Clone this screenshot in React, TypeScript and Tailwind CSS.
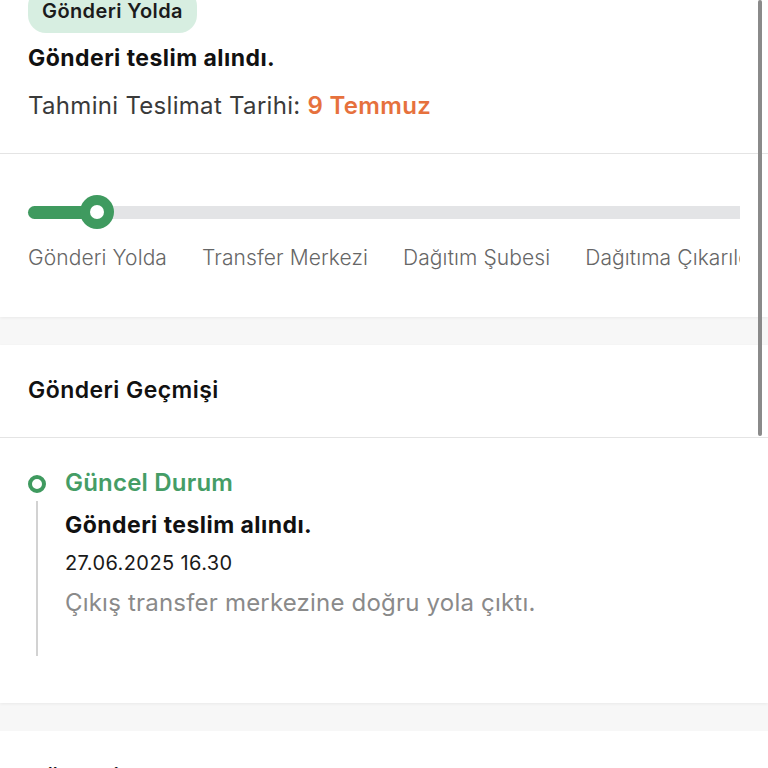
import React from "react";

const font = { fontFamily: "Inter, 'Noto Sans', sans-serif" };

export default function App() {
  const steps = ["Gönderi Yolda", "Transfer Merkezi", "Dağıtım Şubesi", "Dağıtıma Çıkarıldı", "Teslim Edildi"];
  return (
    <div className="relative w-[768px] h-[768px] overflow-hidden bg-[#f7f7f7]" style={font}>
      <div className="-mt-[12px] flex flex-col">
        {/* Card 1 */}
        <div className="bg-white shadow-[0_1px_3px_rgba(0,0,0,0.06)]">
          <div className="px-[28px] pb-[32px]">
            <div className="inline-flex h-[45px] items-center rounded-[18px] bg-[#d7eee1] px-[14px]">
              <span className="text-[20px] leading-[24px] font-semibold tracking-[0.4px] text-[#1b1b1b]">Gönderi Yolda</span>
            </div>
            <div className="mt-[11px] text-[23px] leading-[28px] font-bold tracking-[0.45px] text-[#111]">Gönderi teslim alındı.</div>
            <div className="mt-[19px] text-[24px] leading-[30px] tracking-[0.3px] text-[#3a3a3a]">
              Tahmini Teslimat Tarihi: <span className="font-semibold text-[#e6713d]">9 Temmuz</span>
            </div>
          </div>
          <div className="h-px bg-[#e4e4e4]" />
          <div className="px-[28px] pt-[41px] pb-[46px]">
            <div className="relative flex h-[34px] items-center">
              <div className="h-[13px] w-full rounded-r-[2px] rounded-l-full bg-[#e3e4e6]">
                <div className="h-[13px] w-[70px] rounded-l-full bg-[#3f9a5f]" />
              </div>
              <div className="absolute left-[52px] top-0 flex h-[34px] w-[34px] items-center justify-center rounded-full bg-[#3f9a5f]">
                <div className="h-[14px] w-[14px] rounded-full bg-white" />
              </div>
            </div>
            <div className="mt-[16px] flex gap-[35px] overflow-hidden whitespace-nowrap text-[21px] leading-[26px] font-light tracking-[0.1px] text-[#666]">
              {steps.map((s) => (
                <span key={s} className="shrink-0">{s}</span>
              ))}
            </div>
          </div>
        </div>

        <div className="h-[28px]" />

        {/* Card 2 */}
        <div className="bg-white shadow-[0_1px_3px_rgba(0,0,0,0.06)]">
          <div className="px-[28px] pt-[31px] pb-[33px] text-[23px] leading-[28px] font-semibold tracking-[0.45px] text-[#111]">Gönderi Geçmişi</div>
          <div className="h-px bg-[#e4e4e4]" />
          <div className="flex gap-[19px] px-[28px] pt-[30px] pb-[47px]">
            <div className="flex w-[18px] flex-col items-center pt-[7px]">
              <div className="h-[18px] w-[18px] rounded-full border-[4px] border-[#3f9a5f]" />
              <div className="mt-[8px] h-[155px] w-[1.5px] bg-[#d2d2d2]" />
            </div>
            <div className="flex flex-col">
              <div className="text-[24px] leading-[30px] font-semibold tracking-[0.2px] text-[#459d66]">Güncel Durum</div>
              <div className="mt-[13px] text-[23px] leading-[28px] font-bold tracking-[0.45px] text-[#111]">Gönderi teslim alındı.</div>
              <div className="mt-[11px] text-[20px] leading-[26px] tracking-[0.4px] text-[#1a1a1a]">27.06.2025 16.30</div>
              <div className="mt-[13px] text-[24px] leading-[28px] tracking-[0.2px] text-[#8a8a8a]">Çıkış transfer merkezine doğru yola çıktı.</div>
            </div>
          </div>
        </div>

        <div className="h-[28px]" />

        {/* Card 3 */}
        <div className="bg-white h-[200px]">
          <div className="px-[28px] pt-[32px] text-[23px] leading-[28px] font-semibold tracking-[0.45px] text-[#111]">Gönderi Durumu</div>
        </div>
      </div>

      <div className="absolute right-[6px] top-0 h-[436px] w-[4px] rounded-full bg-[#8a8a8a]" />
    </div>
  );
}
